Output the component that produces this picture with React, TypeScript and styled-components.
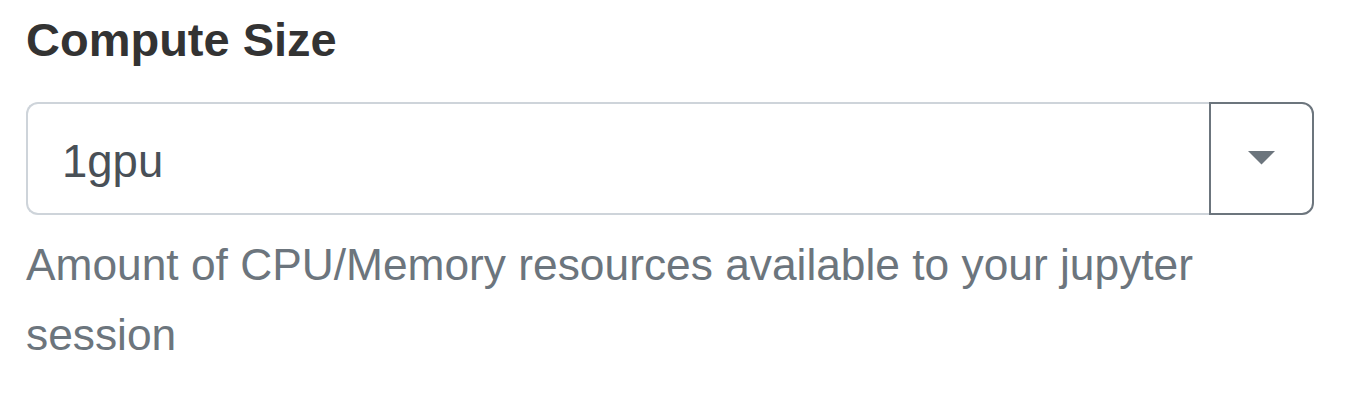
import React from 'react';
import styled, { createGlobalStyle } from 'styled-components';

const GlobalStyle = createGlobalStyle`
  body {
    margin: 0;
    background: #fff;
    font-family: "Liberation Sans", Arial, sans-serif;
  }
`;

const FormGroup = styled.div`
  padding: 12px 42px 0 26px;
`;

const Label = styled.label`
  display: block;
  font-size: 47px;
  line-height: 56px;
  font-weight: 700;
  color: #333;
  margin-bottom: 34px;
`;

const SelectWrap = styled.div`
  display: flex;
  height: 113px;
  width: 1288px;
`;

const SelectValue = styled.div`
  flex: 1;
  display: flex;
  align-items: center;
  padding: 6px 0 0 34px;
  border: 2px solid #ced4da;
  border-right: none;
  border-radius: 12px 0 0 12px;
  font-size: 45.5px;
  color: #495057;
`;

const ToggleButton = styled.button`
  width: 105px;
  display: flex;
  align-items: center;
  justify-content: center;
  background: #fff;
  border: 2px solid #6c757d;
  border-radius: 0 12px 12px 0;
  padding: 0;
  svg {
    display: block;
    margin-top: -2px;
  }
`;

const HelpText = styled.small`
  display: block;
  margin-top: 15px;
  font-size: 44.3px;
  line-height: 70px;
  color: #6c757d;
  width: 1220px;
`;

const App = () => (
  <>
    <GlobalStyle />
    <FormGroup>
      <Label>Compute Size</Label>
      <SelectWrap>
        <SelectValue>1gpu</SelectValue>
        <ToggleButton type="button">
          <svg width="27" height="14" viewBox="0 0 27 14">
            <polygon points="0,0 27,0 13.5,13.5" fill="#6c757d" />
          </svg>
        </ToggleButton>
      </SelectWrap>
      <HelpText>Amount of CPU/Memory resources available to your jupyter session</HelpText>
    </FormGroup>
  </>
);

export default App;
